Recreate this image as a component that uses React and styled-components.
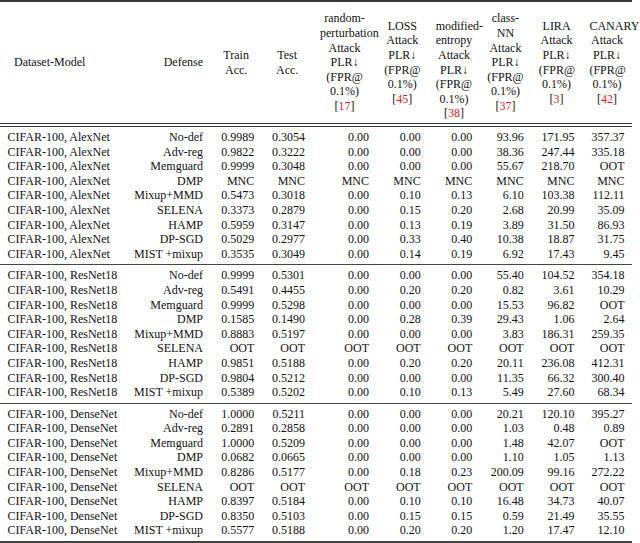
import React from "react";
import styled, { createGlobalStyle } from "styled-components";

const Global = createGlobalStyle`
  html, body { margin: 0; padding: 0; background: #fff; }
  body {
    font-family: "Liberation Serif", "Times New Roman", serif;
    font-size: 12px;
    color: #111;
  }
`;

const Page = styled.div`
  width: 640px;
  height: 543px;
  overflow: hidden;
  background: #fff;
`;

const Table = styled.table`
  width: 632px;
  table-layout: fixed;
  border-collapse: separate;
  border-spacing: 0;
  font-size: 12px;
`;

const Col = styled.col`
  width: ${(p) => p.$w}px;
`;

const HeadCell = styled.th`
  box-sizing: border-box;
  height: 127px;
  padding: ${(p) => (p.$drop ? "14.6px" : "0")} 7.5px 0 ${(p) =>
      p.$indent ? p.$indent : 7.5}px;
  border-top: 2px solid #3a3a3a;
  border-bottom: 4px double #3a3a3a;
  font-weight: normal;
  line-height: 14.6px;
  vertical-align: middle;
  white-space: nowrap;
  text-align: ${(p) => p.$align || "center"};
`;

const Ref = styled.span`
  color: #e0201b;
`;

const Row = styled.tr`
  &:first-child td { padding-top: 3px; }
  &:last-child td {
    padding-bottom: 3px;
    border-bottom: ${(p) => (p.$final ? "2px" : "1px")} solid #444;
  }
`;

const Cell = styled.td`
  padding: 0 7.5px;
  line-height: 14.6px;
  white-space: nowrap;
  text-align: ${(p) => (p.$left ? "left" : "right")};
`;

const widths = [125, 85.5, 51.3, 50.7, 64, 51.7, 51.6, 51.4, 50.8, 50];

const sections = [
  {
    model: "CIFAR-100, AlexNet",
    rows: [
      ["No-def", "0.9989", "0.3054", "0.00", "0.00", "0.00", "93.96", "171.95", "357.37"],
      ["Adv-reg", "0.9822", "0.3222", "0.00", "0.00", "0.00", "38.36", "247.44", "335.18"],
      ["Memguard", "0.9999", "0.3048", "0.00", "0.00", "0.00", "55.67", "218.70", "OOT"],
      ["DMP", "MNC", "MNC", "MNC", "MNC", "MNC", "MNC", "MNC", "MNC"],
      ["Mixup+MMD", "0.5473", "0.3018", "0.00", "0.10", "0.13", "6.10", "103.38", "112.11"],
      ["SELENA", "0.3373", "0.2879", "0.00", "0.15", "0.20", "2.68", "20.99", "35.09"],
      ["HAMP", "0.5959", "0.3147", "0.00", "0.13", "0.19", "3.89", "31.50", "86.93"],
      ["DP-SGD", "0.5029", "0.2977", "0.00", "0.33", "0.40", "10.38", "18.87", "31.75"],
      ["MIST +mixup", "0.3535", "0.3049", "0.00", "0.14", "0.19", "6.92", "17.43", "9.45"],
    ],
  },
  {
    model: "CIFAR-100, ResNet18",
    rows: [
      ["No-def", "0.9999", "0.5301", "0.00", "0.00", "0.00", "55.40", "104.52", "354.18"],
      ["Adv-reg", "0.5491", "0.4455", "0.00", "0.20", "0.20", "0.82", "3.61", "10.29"],
      ["Memguard", "0.9999", "0.5298", "0.00", "0.00", "0.00", "15.53", "96.82", "OOT"],
      ["DMP", "0.1585", "0.1490", "0.00", "0.28", "0.39", "29.43", "1.06", "2.64"],
      ["Mixup+MMD", "0.8883", "0.5197", "0.00", "0.00", "0.00", "3.83", "186.31", "259.35"],
      ["SELENA", "OOT", "OOT", "OOT", "OOT", "OOT", "OOT", "OOT", "OOT"],
      ["HAMP", "0.9851", "0.5188", "0.00", "0.20", "0.20", "20.11", "236.08", "412.31"],
      ["DP-SGD", "0.9804", "0.5212", "0.00", "0.00", "0.00", "11.35", "66.32", "300.40"],
      ["MIST +mixup", "0.5389", "0.5202", "0.00", "0.10", "0.13", "5.49", "27.60", "68.34"],
    ],
  },
  {
    model: "CIFAR-100, DenseNet",
    rows: [
      ["No-def", "1.0000", "0.5211", "0.00", "0.00", "0.00", "20.21", "120.10", "395.27"],
      ["Adv-reg", "0.2891", "0.2858", "0.00", "0.00", "0.00", "1.03", "0.48", "0.89"],
      ["Memguard", "1.0000", "0.5209", "0.00", "0.00", "0.00", "1.48", "42.07", "OOT"],
      ["DMP", "0.0682", "0.0665", "0.00", "0.00", "0.00", "1.10", "1.05", "1.13"],
      ["Mixup+MMD", "0.8286", "0.5177", "0.00", "0.18", "0.23", "200.09", "99.16", "272.22"],
      ["SELENA", "OOT", "OOT", "OOT", "OOT", "OOT", "OOT", "OOT", "OOT"],
      ["HAMP", "0.8397", "0.5184", "0.00", "0.10", "0.10", "16.48", "34.73", "40.07"],
      ["DP-SGD", "0.8350", "0.5103", "0.00", "0.15", "0.15", "0.59", "21.49", "35.55"],
      ["MIST +mixup", "0.5577", "0.5188", "0.00", "0.20", "0.20", "1.20", "17.47", "12.10"],
    ],
  },
];

const attackHeads = [
  { lines: ["random-", "perturbation", "Attack"], ref: "17" },
  { lines: ["LOSS", "Attack"], ref: "45" },
  { lines: ["modified-", "entropy", "Attack"], ref: "38", drop: true },
  { lines: ["class-", "NN", "Attack"], ref: "37" },
  { lines: ["LIRA", "Attack"], ref: "3" },
  { lines: ["CANARY", "Attack"], ref: "42" },
];

export default function App() {
  return (
    <Page>
      <Global />
      <Table>
        <colgroup>
          {widths.map((w, i) => (
            <Col key={i} $w={w} />
          ))}
        </colgroup>
        <thead>
          <tr>
            <HeadCell $align="left" $indent={14}>Dataset-Model</HeadCell>
            <HeadCell $align="right">Defense</HeadCell>
            <HeadCell>
              Train
              <br />
              Acc.
            </HeadCell>
            <HeadCell>
              Test
              <br />
              Acc.
            </HeadCell>
            {attackHeads.map((h) => (
              <HeadCell key={h.ref} $drop={h.drop}>
                {h.lines.map((l) => (
                  <React.Fragment key={l}>
                    {l}
                    <br />
                  </React.Fragment>
                ))}
                PLR↓
                <br />
                (FPR@
                <br />
                0.1%)
                <br />[<Ref>{h.ref}</Ref>]
              </HeadCell>
            ))}
          </tr>
        </thead>
        {sections.map((s, si) => (
          <tbody key={s.model}>
            {s.rows.map((r, ri) => (
              <Row key={ri} $final={si === sections.length - 1}>
                <Cell $left>{s.model}</Cell>
                {r.map((v, vi) => (
                  <Cell key={vi}>{v}</Cell>
                ))}
              </Row>
            ))}
          </tbody>
        ))}
      </Table>
    </Page>
  );
}
